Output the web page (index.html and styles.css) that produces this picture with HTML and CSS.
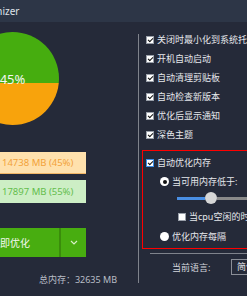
FILE: index.html
```html
<!DOCTYPE html>
<html lang="zh">
<head>
    <meta charset="UTF-8">
    <meta name="viewport" content="width=device-width, initial-scale=1.0">
    <title>Memory Optimizer</title>
    <link rel="stylesheet" href="styles.css">
</head>
<body>
<div class="window">
    <div class="titlebar"><span class="title">Memory Optimizer</span></div>

    <div class="main">
        <!-- memory usage -->
        <div class="left">
            <div class="left-col">
                <div class="gauge"><span class="gauge-label">45%</span></div>
                <div class="stat stat-used">14738 MB (45%)</div>
                <div class="stat stat-free">17897 MB (55%)</div>
                <div class="btn-group">
                    <button class="btn-main">立即优化</button>
                    <span class="btn-sep"></span>
                    <button class="btn-drop" aria-label="more">
                        <svg width="8" height="5" viewBox="0 0 8 5"><polyline points="1,1 4,4 7,1" fill="none" stroke="#d6efc6" stroke-width="1.2"/></svg>
                    </button>
                </div>
            </div>
            <div class="total">总内存：32635 MB</div>
        </div>

        <!-- settings -->
        <div class="right">
            <div class="options">
                <label class="check"><span class="box checked"></span>关闭时最小化到系统托盘</label>
                <label class="check"><span class="box checked"></span>开机自动启动</label>
                <label class="check"><span class="box checked"></span>自动清理剪贴板</label>
                <label class="check"><span class="box checked"></span>自动检查新版本</label>
                <label class="check"><span class="box checked"></span>优化后显示通知</label>
                <label class="check"><span class="box checked"></span>深色主题</label>
            </div>

            <div class="auto-box">
                <label class="check"><span class="box checked focus"></span>自动优化内存</label>
                <label class="check radio-row first"><span class="radio on"></span>当可用内存低于:</label>
                <div class="slider">
                    <span class="slider-fill"></span>
                    <span class="slider-thumb"></span>
                    <span class="slider-rest"></span>
                </div>
                <label class="check cpu-row"><span class="box"></span>当cpu空闲的时候</label>
                <label class="check radio-row last"><span class="radio"></span>优化内存每隔</label>
            </div>

            <div class="sep"></div>

            <div class="lang-row">
                <span class="lang-label">当前语言:</span>
                <span class="combo">简体中文</span>
            </div>
        </div>
    </div>
</div>
</body>
</html>
```

FILE: styles.css
```css
/* Global */
* {
    margin: 0;
    padding: 0;
    box-sizing: border-box;
}

body {
    background-color: #252a39;
    font-family: "Noto Sans", "Noto Sans CJK SC", sans-serif;
    color: #e6e8ec;
    width: 247px;
    height: 296px;
    overflow: hidden;
}

.window {
    width: 520px;
    margin-left: -80px;
}

/* Title bar */
.titlebar {
    height: 22px;
    background-color: #2d3647;
    display: flex;
    align-items: center;
    padding-left: 11px;
    font-size: 10px;
    color: #dfe3ea;
    white-space: nowrap;
}

.main {
    display: flex;
}

/* Left side */
.left {
    width: 218px;
    flex: none;
    padding-top: 10px;
    display: flex;
    flex-direction: column;
}

.left-col {
    margin-left: 19px;
    width: 147px;
    display: flex;
    flex-direction: column;
}

.gauge {
    width: 93px;
    height: 93px;
    margin: 0 auto;
    border-radius: 50%;
    background: linear-gradient(to top, #f8a30c 45%, #46ad0f 45%);
    display: flex;
    align-items: center;
    justify-content: center;
}

.gauge-label {
    font-size: 13px;
    color: #f4f6f2;
    line-height: 14px;
}

.stat {
    height: 22px;
    line-height: 22px;
    padding-left: 63px;
    font-size: 9.5px;
    white-space: nowrap;
}

.stat-used {
    margin-top: 27px;
    background-color: #ffe1ad;
    color: #f2a23a;
    border-bottom: 1px solid #f2b565;
}

.stat-free {
    height: 23px;
    line-height: 23px;
    margin-top: 6px;
    background-color: #cdeec5;
    color: #63bd4c;
}

.btn-group {
    display: flex;
    height: 29px;
    margin-top: 25px;
}

.btn-group button {
    border: none;
    background-color: #48ad10;
    color: #f4f8f0;
    font-family: inherit;
}

.btn-main {
    width: 120px;
    padding-left: 51px;
    text-align: left;
    font-size: 10px;
    white-space: nowrap;
}

.btn-sep {
    width: 2px;
    background-color: #3a8c0b;
}

.btn-drop {
    flex: 1;
    display: flex;
    align-items: center;
    justify-content: center;
}

.total {
    margin-top: 17px;
    padding-right: 21px;
    text-align: right;
    font-size: 9px;
    line-height: 12px;
    color: #b9bdc6;
    white-space: nowrap;
}

/* Right side */
.right {
    flex: 1;
    margin-top: 12px;
    height: 249px;
    border-left: 1px solid #7f838c;
    padding-left: 7px;
    display: flex;
    flex-direction: column;
}

.options {
    display: flex;
    flex-direction: column;
    gap: 8px;
}

.check {
    display: flex;
    align-items: center;
    gap: 3px;
    height: 11px;
    font-size: 9px;
    line-height: 11px;
    white-space: nowrap;
}

.box {
    width: 8px;
    height: 8px;
    flex: none;
    background-color: #fff;
    border: 1px solid #9aa0aa;
    position: relative;
}

.box.checked::after {
    content: "";
    position: absolute;
    left: 2px;
    top: 0;
    width: 2px;
    height: 4px;
    border-right: 1.5px solid #111;
    border-bottom: 1.5px solid #111;
    transform: rotate(45deg);
}

.box.focus {
    border-color: #3d8ee8;
}

.radio {
    width: 9px;
    height: 9px;
    flex: none;
    border-radius: 50%;
    background-color: #fff;
    display: flex;
    align-items: center;
    justify-content: center;
}

.radio.on::after {
    content: "";
    width: 4px;
    height: 4px;
    border-radius: 50%;
    background-color: #111;
}

.auto-box {
    margin-top: 10px;
    margin-left: -4px;
    border: 1px solid #f00;
    padding: 6px 0 6px 3px;
    display: flex;
    flex-direction: column;
}

.radio-row {
    margin-left: 14px;
}

.radio-row.first {
    margin-top: 8px;
}

.radio-row.last {
    margin-top: 9px;
}

.slider {
    margin: 5px 0 0 31px;
    height: 12px;
    display: flex;
    align-items: center;
}

.slider-fill {
    width: 28px;
    height: 3px;
    background-color: #4a8fe4;
}

.slider-thumb {
    width: 12px;
    height: 12px;
    border-radius: 50%;
    background-color: #d6d6d6;
}

.slider-rest {
    width: 120px;
    height: 3px;
    background-color: #8a8a8a;
}

.cpu-row {
    margin: 7px 0 0 32px;
}

.sep {
    margin: 4px 0 0 4px;
    height: 1px;
    background-color: #7f838c;
}

.lang-row {
    margin-top: 5px;
    padding-left: 26px;
    height: 16px;
    display: flex;
    align-items: center;
    font-size: 9px;
    white-space: nowrap;
}

.lang-label {
    width: 59px;
    color: #d4d7dd;
}

.combo {
    height: 16px;
    width: 90px;
    line-height: 14px;
    border: 1px solid #8a8e97;
    padding: 0 5px;
}
```
